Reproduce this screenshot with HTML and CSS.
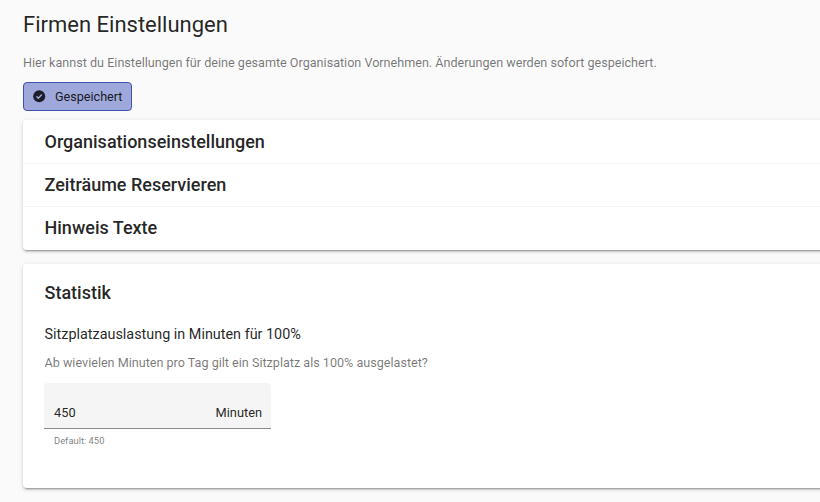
FILE: index.html
```html
<!DOCTYPE html>
<html lang="de">
<head>
    <meta charset="UTF-8">
    <meta name="viewport" content="width=device-width, initial-scale=1.0">
    <title>Firmen Einstellungen</title>
    <link rel="stylesheet" href="styles.css">
</head>
<body>
    <main class="page">
        <h1 class="page-title">Firmen Einstellungen</h1>
        <p class="page-hint">Hier kannst du Einstellungen für deine gesamte Organisation Vornehmen. Änderungen werden sofort gespeichert.</p>
        <button class="save-button">
            <svg class="save-icon" viewBox="0 0 24 24" width="14.4" height="14.4">
                <circle cx="12" cy="12" r="10" fill="#1c1c2a"/>
                <path d="M7.6 12.3l3 3 5.8-6" fill="none" stroke="#9fa8da" stroke-width="2.4"/>
            </svg>
            <span>Gespeichert</span>
        </button>

        <section class="card panel-list">
            <h2 class="panel-title">Organisationseinstellungen</h2>
            <h2 class="panel-title">Zeiträume Reservieren</h2>
            <h2 class="panel-title">Hinweis Texte</h2>
        </section>

        <section class="card stats">
            <h2 class="stats-title">Statistik</h2>
            <h3 class="field-title">Sitzplatzauslastung in Minuten für 100%</h3>
            <p class="field-hint">Ab wievielen Minuten pro Tag gilt ein Sitzplatz als 100% ausgelastet?</p>
            <div class="input-box">
                <span>450</span>
                <span>Minuten</span>
            </div>
            <div class="input-note">Default: 450</div>
        </section>

        <section class="card next-card"></section>
    </main>
</body>
</html>
```

FILE: styles.css
```css
html, body {
    height: 100%;
    overflow: hidden;
}
body {
    font-family: Roboto, sans-serif;
    margin: 0;
    background-color: #fafafa;
    color: rgba(0, 0, 0, 0.87);
}
.page {
    padding: 0 0 0 23px;
    width: 830px;
}
.page-title {
    margin: 0;
    padding-top: 11px;
    font-size: 22px;
    line-height: 28px;
    font-weight: 400;
}
.page-hint {
    margin: 14px 0 0;
    font-size: 12.6px;
    line-height: 20px;
    color: rgba(0, 0, 0, 0.54);
}
.save-button {
    display: flex;
    align-items: center;
    gap: 8.6px;
    margin: 9px 0 9px;
    padding: 0 8px;
    width: 109px;
    height: 29px;
    box-sizing: border-box;
    background-color: #9fa8da;
    border: 1px solid #3f51b5;
    border-radius: 4px;
    font-family: inherit;
    font-size: 12.6px;
    color: rgba(0, 0, 0, 0.87);
}
.save-icon {
    flex: none;
}
.card {
    background: #fff;
    border-radius: 4px;
    box-shadow: 0 3px 1px -2px rgba(0, 0, 0, 0.2), 0 2px 2px 0 rgba(0, 0, 0, 0.14), 0 1px 5px 0 rgba(0, 0, 0, 0.12);
}
.panel-title {
    margin: 0;
    padding: 0 21.5px;
    height: 43px;
    line-height: 41px;
    font-size: 18px;
    font-weight: 500;
    border-top: 1px solid #f5f5f5;
    box-sizing: border-box;
}
.panel-title:first-child {
    line-height: 43px;
    border-top: none;
}
.panel-title:last-child {
    height: 44px;
}
.stats {
    margin-top: 14px;
    padding: 16px 21.5px 0;
    height: 224px;
    box-sizing: border-box;
}
.stats-title {
    margin: 0;
    font-size: 18px;
    line-height: 26px;
    font-weight: 500;
}
.field-title {
    margin: 17px 0 0;
    font-size: 14.4px;
    line-height: 24px;
    font-weight: 400;
}
.field-hint {
    margin: 6px 0 0;
    font-size: 12.6px;
    line-height: 20px;
    color: rgba(0, 0, 0, 0.54);
}
.input-box {
    display: flex;
    align-items: flex-end;
    justify-content: space-between;
    width: 227px;
    height: 46px;
    margin: 10px 0 0 -0.5px;
    padding: 0 9px 7px 10px;
    box-sizing: border-box;
    background: #f5f5f5;
    border-bottom: 1px solid #8c8c8c;
    border-radius: 4px 4px 0 0;
    font-size: 12.8px;
    line-height: 16px;
}
.input-note {
    margin: 6px 0 0 -0.5px;
    padding-left: 10px;
    font-size: 9.4px;
    line-height: 12px;
    color: rgba(0, 0, 0, 0.54);
}
.next-card {
    margin-top: 14px;
    height: 0;
}
```
